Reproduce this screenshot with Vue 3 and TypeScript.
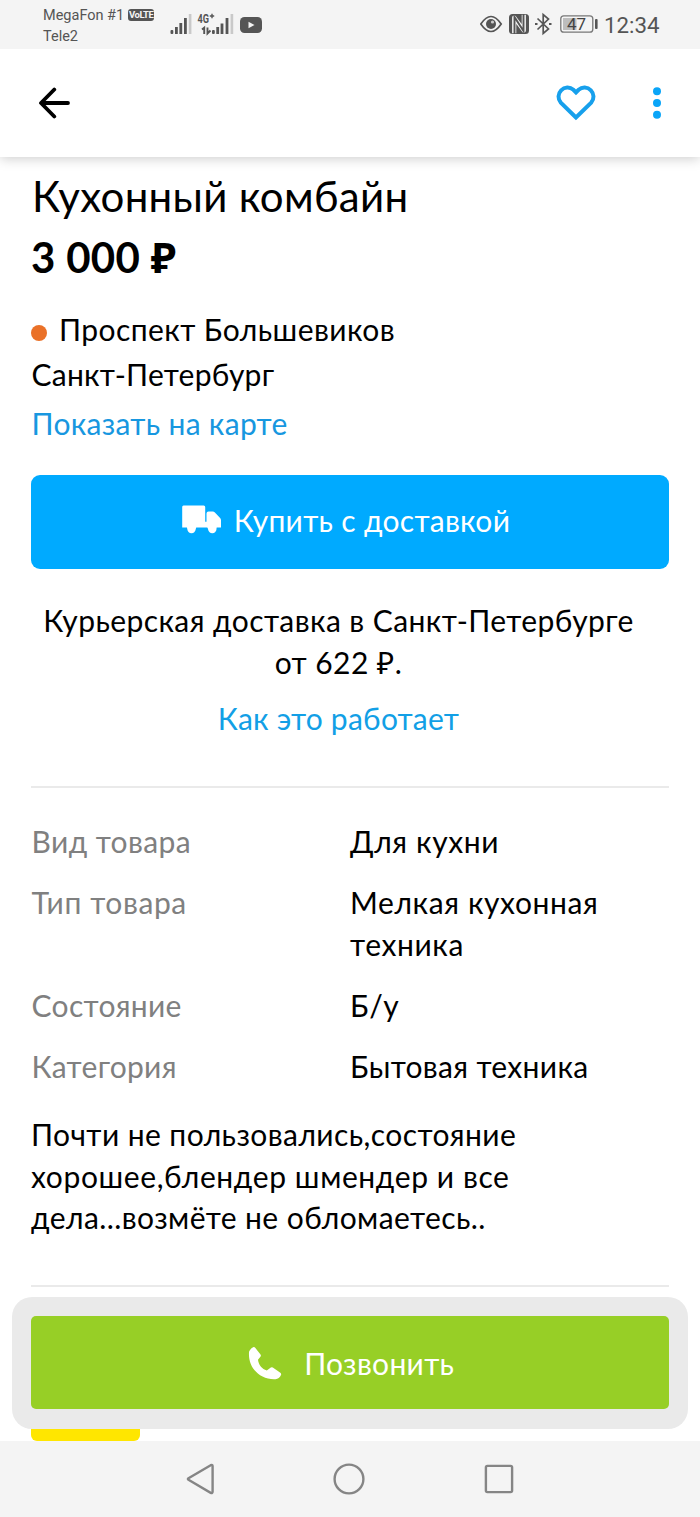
<script setup lang="ts">
interface Spec {
  label: string
  value: string
  labelClass: string
  valueClass: string
}

const specs: Spec[] = [
  { label: 'Вид товара', value: 'Для кухни', labelClass: 'snug', valueClass: 'wide' },
  { label: 'Тип товара', value: 'Мелкая кухонная техника', labelClass: 'wide', valueClass: 'wide' },
  { label: 'Состояние', value: 'Б/у', labelClass: 'tight', valueClass: 'wide' },
  { label: 'Категория', value: 'Бытовая техника', labelClass: 'tight', valueClass: 'tight' },
]
</script>

<template>
  <div class="screen">
    <div class="status">
      <div class="carriers">
        <div class="carrier">MegaFon #1 <span class="volte">VoLTE</span></div>
        <div class="carrier">Tele2</div>
      </div>
      <svg class="signals" width="96" height="48" viewBox="0 0 96 48">
        <g fill="#555">
          <rect x="0.5" y="30" width="2.8" height="4" rx="1" />
          <rect x="5" y="27" width="2.8" height="7" />
          <rect x="9.4" y="23" width="2.8" height="11" />
          <rect x="14" y="18" width="2.8" height="16" />
          <rect x="46.3" y="27" width="2.8" height="7" />
          <rect x="50.6" y="23.5" width="2.8" height="10.5" />
          <rect x="55.6" y="18" width="2.8" height="16" />
          <rect x="42" y="30" width="2.8" height="4" rx="1" />
          <rect x="70" y="17" width="22" height="16" rx="4.5" />
        </g>
        <g fill="#c9c9c9">
          <rect x="18.8" y="14" width="2.6" height="20" />
          <rect x="60.6" y="14" width="2.6" height="20" />
        </g>
        <path d="M32 29.500l2.200-1.800V34M37.500 27.500v6l3-3" fill="none" stroke="#555" stroke-width="1.9" />
        <path d="M78.5 21.700v6.600l6-3.300z" fill="#f4f4f4" />
        <text class="network" x="27.500" y="23" textLength="11.500" lengthAdjust="spacingAndGlyphs">4G</text>
        <path d="M39.800 16h4.400M42 13.800v4.400" stroke="#555" stroke-width="1.4" />
      </svg>
      <svg class="state-icons" width="124" height="48" viewBox="0 0 124 48">
        <g fill="none" stroke="#555" stroke-width="1.7">
          <path d="M.8 24Q11 9 21.2 24Q11 39 .8 24z" />
          <circle cx="11" cy="24" r="5" fill="#555" stroke="none" />
          <circle cx="12.5" cy="22" r="1.6" fill="#ccc" stroke="none" />
        </g>
        <rect x="29" y="14" width="20" height="20" rx="3.5" fill="#555" />
        <path d="M34.200 33.200V17.500L43.800 30.500V14.800" fill="none" stroke="#f4f4f4" stroke-width="4.200" stroke-linejoin="round" />
        <path d="M34.500 34V17L43.500 31V14" fill="none" stroke="#555" stroke-width="1.900" />
        <path d="M57.5 18.5l11 10.5-5.3 4.5V14.5l5.3 4.5-11 10.5" fill="none" stroke="#555" stroke-width="1.7" />
        <path d="M55 24h2.5M69 24h2.5" stroke="#555" stroke-width="2.2" />
        <rect x="80.8" y="15.8" width="32" height="16.4" rx="3" fill="none" stroke="#777" stroke-width="1.3" />
        <rect x="83" y="18" width="13.5" height="12" fill="#bdbdbd" />
        <rect x="115" y="19" width="2.6" height="10" rx="1" fill="#555" />
        <text class="battery" x="87" y="30" textLength="19">47</text>
      </svg>
      <span class="clock">12:34</span>
    </div>

    <header class="toolbar">
      <svg class="back" width="34" height="32" viewBox="0 0 34 32">
        <path d="M16.3 2.5L3 16l13.3 13.5M3.5 16H30" fill="none" stroke="#000" stroke-width="3.8" stroke-linecap="round" stroke-linejoin="round" />
      </svg>
      <svg class="heart" width="40" height="36" viewBox="0 0 40 36">
        <path d="M20 32.5L4.8 17.6A9 9 0 0 1 17.4 4.8L20 7.4l2.6-2.6A9 9 0 0 1 35.2 17.6z" fill="none" stroke="#17a0ec" stroke-width="4" />
      </svg>
      <svg class="more" width="10" height="32" viewBox="0 0 10 32" fill="#0aa5f8">
        <circle cx="5" cy="4.3" r="4" />
        <circle cx="5" cy="16" r="4" />
        <circle cx="5" cy="27.7" r="4" />
      </svg>
    </header>

    <main class="content">
      <h1 class="title">Кухонный комбайн</h1>
      <div class="price">3 000 ₽</div>
      <div class="metro"><i class="dot"></i><span>Проспект Большевиков</span></div>
      <div class="city">Санкт-Петербург</div>
      <a class="map-link">Показать на карте</a>

      <button class="buy" type="button">
        <svg width="40" height="29" viewBox="0 0 40 29" fill="#fff">
          <path d="M1.5.5h20.2a1.5 1.5 0 0 1 1.5 1.5v14.7h1.3V8.500a2 2 0 0 1 2-2h4.200a3 3 0 0 1 2.200 1l5.200 5.500a3 3 0 0 1 .9 2.200V22.500h-4.300a5 5 0 0 1-9.400 0H14.300a5 5 0 0 1-9.400 0H.200V2A1.500 1.500 0 0 1 1.500.500z" />
          <circle cx="9.500" cy="24" r="4.200" />
          <circle cx="30.300" cy="24" r="4.200" />
        </svg>
        <span>Купить с доставкой</span>
      </button>

      <p class="delivery">Курьерская доставка в Санкт-Петербурге<br />от 622 ₽.</p>
      <a class="how">Как это работает</a>

      <dl class="specs">
        <template v-for="s in specs" :key="s.label">
          <dt :class="s.labelClass">{{ s.label }}</dt>
          <dd :class="s.valueClass">{{ s.value }}</dd>
        </template>
      </dl>

      <p class="description">Почти не пользовались,состояние<br /><span class="wide">хорошее,блендер шмендер и все</span><br />дела...возмёте не обломаетесь..</p>
      <div class="chip"></div>
    </main>

    <div class="call-panel">
      <button class="call" type="button">
        <svg width="34" height="34" viewBox="0 0 34 34">
          <path d="M1 6.500C1.200 4.500 4 1.500 5.800 1.100Q6.600 1 7.200 1.800L12.500 8.600Q13.200 9.500 12.600 10.400L10 13.700C10.500 18.500 14 23 18.800 24.500L22.800 21.600Q23.800 21 24.800 21.600L32 26.500Q33.600 27.500 33 29C31.800 31.500 30 33 27.500 33.200C12 34 0 22 1 6.500z" fill="#fff" />
        </svg>
        <span>Позвонить</span>
      </button>
    </div>

    <nav class="system-nav">
      <svg width="28" height="32" viewBox="0 0 28 32">
        <path d="M24.700 2.200L2.500 15.200Q1.300 16 2.500 16.800L24.700 29.800Q26.600 30.600 26.600 28.800V3.200Q26.600 1.400 24.700 2.200z" />
      </svg>
      <svg width="32" height="32" viewBox="0 0 32 32"><circle cx="16" cy="16" r="14.400" /></svg>
      <svg width="30" height="30" viewBox="0 0 30 30"><rect x="1.900" y="1.900" width="26.200" height="26.200" rx="1.500" /></svg>
    </nav>
  </div>
</template>

<style>
body {
  margin: 0;
  background: #fff;
}
</style>

<style scoped>
.screen {
  position: relative;
  display: flex;
  flex-direction: column;
  width: 700px;
  height: 1517px;
  overflow: hidden;
  background: #fff;
  color: #000;
  font-family: Lato, "Noto Sans", sans-serif;
  font-size: 30px;
  line-height: 42px;
  letter-spacing: 0.42px;
}

.wide {
  letter-spacing: 0.6px;
}

.snug {
  letter-spacing: 0.4px;
}

.tight {
  letter-spacing: 0.33px;
}

.status {
  position: relative;
  z-index: 1;
  display: flex;
  flex: none;
  height: 48.500px;
  background: #f4f4f4;
  color: #555;
  font-family: Roboto, sans-serif;
  letter-spacing: 0;
}

.carriers {
  width: 127px;
  padding: 4.500px 0 0 43px;
  box-sizing: border-box;
  width: 169.500px;
  font-size: 14.500px;
  line-height: 21px;
}

.carrier {
  display: flex;
  align-items: center;
  gap: 4px;
  white-space: nowrap;
}

.volte {
  width: 26px;
  height: 12px;
  border-radius: 3px;
  background: #555;
  color: #f4f4f4;
  font-size: 9.500px;
  font-weight: 700;
  line-height: 12.500px;
  letter-spacing: -0.500px;
  text-align: center;
}

.network {
  font: 700 12px Roboto, sans-serif;
  fill: #555;
}

.battery {
  font: 17px Roboto, sans-serif;
  fill: #444;
}

.signals {
  margin-left: 0.500px;
}

.state-icons {
  margin-left: 214px;
}

.clock {
  font-size: 22.300px;
  line-height: 51px;
}

.toolbar {
  display: flex;
  flex: none;
  align-items: center;
  box-sizing: border-box;
  height: 108.500px;
  padding: 0 38px 0 37.500px;
  box-shadow: 0 1px 12px rgba(0, 0, 0, 0.22);
}

.heart {
  margin-left: auto;
}

.more {
  margin-left: 56.500px;
}

.content {
  display: flex;
  flex: 1;
  flex-direction: column;
  align-items: flex-start;
  min-height: 0;
  padding: 14px 31px 0;
}

.title {
  margin: 0;
  padding-left: 1px;
  font-size: 42px;
  font-weight: 400;
  line-height: 50px;
  letter-spacing: 0.3px;
}

.price {
  margin-top: 11px;
  font-size: 42px;
  font-weight: 700;
  line-height: 50px;
  letter-spacing: 0.3px;
}

.metro {
  display: flex;
  align-items: center;
  gap: 12px;
  margin-top: 26px;
}

.dot {
  width: 16px;
  height: 16px;
  margin-top: 7px;
  border-radius: 50%;
  background: #ea7128;
}

.city {
  margin-top: 3px;
  padding-left: 0.500px;
  letter-spacing: 0.25px;
}

.map-link {
  margin-top: 7px;
  padding-left: 0.500px;
  color: #1797e0;
  letter-spacing: 0.3px;
}

.buy,
.call {
  display: flex;
  align-items: center;
  justify-content: center;
  width: 638px;
  height: 93.500px;
  padding: 0;
  border: 0;
  color: #fff;
  font: inherit;
  letter-spacing: 0.3px;
}

.buy {
  flex: none;
  gap: 12px;
  margin-top: 31px;
  padding: 0 8px 3px 0;
  border-radius: 9px;
  background: #00aaff;
}

.buy svg {
  margin-top: -2px;
}

.delivery {
  width: 615px;
  margin: 30.500px 0 0;
  text-align: center;
  white-space: nowrap;
}

.how {
  width: 615px;
  margin-top: 14px;
  color: #129fe6;
  letter-spacing: 0.25px;
  text-align: center;
}

.specs {
  display: grid;
  grid-template-columns: 319px 290px;
  row-gap: 19px;
  box-sizing: border-box;
  width: 638px;
  margin: 47px 0 0;
  padding-top: 32px;
  border-top: 2px solid #eaeaea;
}

.specs dt {
  padding-left: 0.500px;
  color: #808080;
}

.specs dd {
  margin: 0;
}

.description {
  box-sizing: border-box;
  width: 638px;
  height: 173px;
  flex: none;
  margin: 27px 0 0;
  border-bottom: 2px solid #eaeaea;
  line-height: 41.600px;
  white-space: nowrap;
}

.chip {
  flex: none;
  width: 109px;
  height: 93px;
  margin-top: 60.500px;
  border-radius: 6px;
  background: #ffe600;
}

.call-panel {
  position: absolute;
  bottom: 88.500px;
  left: 12px;
  box-sizing: border-box;
  width: 676px;
  height: 132px;
  padding: 19px;
  border-radius: 20px;
  background: #eaeaea;
}

.call {
  gap: 22.500px;
  padding: 1px 0 0 2px;
  border-radius: 5px;
  background: #97cf26;
}

.system-nav {
  display: flex;
  flex: none;
  align-items: center;
  justify-content: center;
  gap: 119px;
  height: 76.500px;
  padding-right: 1px;
  background: #f4f4f4;
}

.system-nav svg {
  fill: none;
  stroke: #858585;
  stroke-width: 2.400px;
}
</style>
